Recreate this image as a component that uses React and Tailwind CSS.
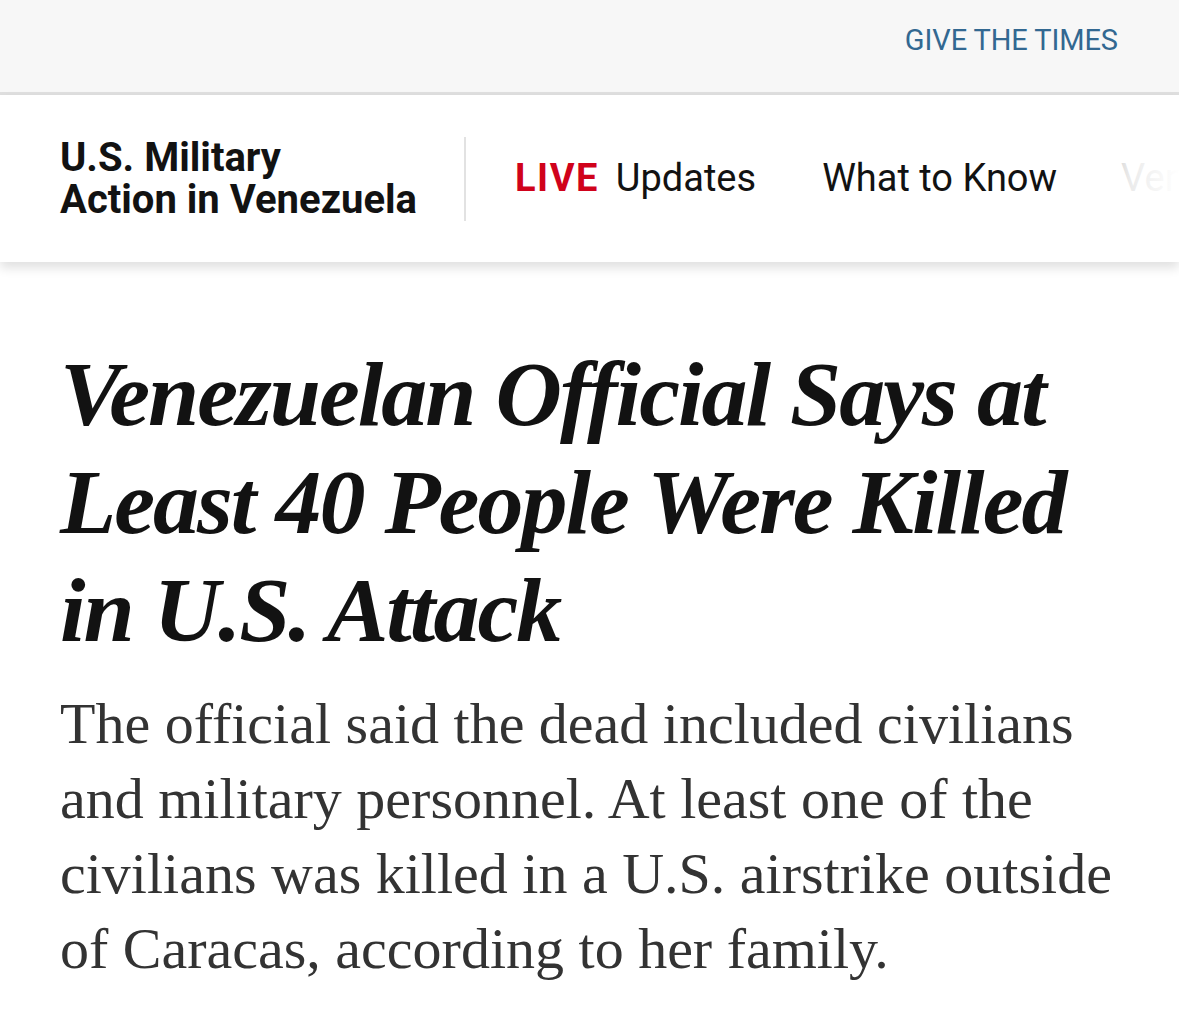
import React from "react";

const sans = "font-['Roboto',sans-serif]";

const App = () => {
  return (
    <div className="w-[1179px] h-[1023px] overflow-hidden bg-white">
      {/* top bar */}
      <div className="h-[95px] bg-[#f7f7f7] border-b-[3px] border-[#dfdfdf] flex items-start justify-end pr-[61px] pt-[22px]">
        <span className={`${sans} text-[29px] leading-[36px] text-[#326891] tracking-[-0.1px]`}>GIVE THE TIMES</span>
      </div>

      {/* section nav */}
      <div className="relative h-[167px] bg-white shadow-[0_6px_10px_rgba(0,0,0,0.12)] flex items-center pl-[60px] overflow-hidden">
        <div className={`${sans} shrink-0 whitespace-nowrap font-bold text-[40px] leading-[42px] text-[#121212] pr-[47px] border-r-2 border-[#e2e2e2]`}>
          U.S. Military
          <br />
          Action in Venezuela
        </div>
        <div className={`${sans} flex items-center text-[38px] text-[#121212] whitespace-nowrap pl-[49px]`}>
          <span className="font-bold text-[#d0021b] tracking-[1.5px] mr-[17px]">LIVE</span>
          <span>Updates</span>
          <span className="ml-[66px]">What to Know</span>
          <span className="ml-[64px] text-[#999]">Venezuela</span>
        </div>
        <div className="absolute right-0 top-0 h-full w-[100px] bg-gradient-to-r from-transparent via-white/80 to-white" />
      </div>

      {/* headline */}
      <div className="px-[60px] pt-[78px]">
        <h1 className="font-['Liberation_Serif',serif] font-bold italic text-[92px] leading-[108px] tracking-[-2px] text-[#121212]">
          Venezuelan Official Says at
          <br />
          Least 40 People Were Killed
          <br />
          in U.S. Attack
        </h1>
        <p className="mt-[22px] font-['Liberation_Serif',serif] text-[58px] leading-[75px] text-[#333]">
          The official said the dead included civilians and military personnel. At least one of the civilians was killed in a U.S. airstrike outside of Caracas, according to her family.
        </p>
      </div>
    </div>
  );
};

export default App;
